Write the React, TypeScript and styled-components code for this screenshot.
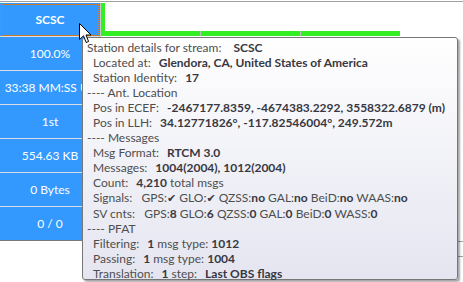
import styled, { createGlobalStyle } from 'styled-components';

const GlobalStyle = createGlobalStyle`
  html, body {
    margin: 0;
    padding: 0;
    background: #ffffff;
  }
  body {
    font-family: Lato, "Noto Sans", sans-serif;
  }
`;

const Screen = styled.div`
  position: relative;
  width: 463px;
  height: 282px;
  overflow: hidden;
  background: #ffffff;
  padding-top: 1px;
  box-sizing: border-box;
`;

const Frame = styled.div`
  display: flex;
  border-top: 1px solid #a0a0a0;
  padding-top: 1px;
`;

const SideColumn = styled.div`
  width: 100px;
  display: flex;
  flex-direction: column;
  border-right: 1px solid #c8c8c8;
`;

const SideCell = styled.div<{ $last?: boolean; $focused?: boolean; $bold?: boolean }>`
  height: 34px;
  box-sizing: border-box;
  background: #3399ff;
  color: #ffffff;
  font-size: 12px;
  font-weight: ${(p) => (p.$bold ? 700 : 400)};
  display: flex;
  align-items: center;
  justify-content: center;
  white-space: nowrap;
  overflow: hidden;
  border-bottom: 1px solid ${(p) => (p.$last ? '#7a7a7a' : '#d8dde4')};
  outline: ${(p) => (p.$focused ? '1px dotted #d08030' : 'none')};
  outline-offset: -2px;
`;

const MainArea = styled.div`
  flex: 1;
  display: flex;
  flex-direction: column;
`;

const BarRow = styled.div`
  display: flex;
  align-items: flex-end;
  height: 34px;
`;

const BarCell = styled.div<{ $first?: boolean }>`
  width: 99px;
  height: ${(p) => (p.$first ? 33 : 5)}px;
  box-sizing: border-box;
  border-bottom: 5px solid #33ee22;
  border-left: ${(p) => (p.$first ? '4px solid #33ee22' : 'none')};
  margin-bottom: 1px;
`;

const Tick = styled.div`
  width: 1px;
  height: 5px;
  margin-bottom: 1px;
  background: #c0c0c0;
`;

const BodyRows = styled.div`
  height: 204px;
  border-bottom: 1px solid #a0a0a0;
`;

const TailRow = styled.div`
  height: 14px;
  border-bottom: 1px solid #a0a0a0;
`;

const Tooltip = styled.div`
  position: absolute;
  left: 82px;
  top: 37px;
  width: 376px;
  height: 243px;
  box-sizing: border-box;
  border: 1px solid #767676;
  border-radius: 3px;
  background: linear-gradient(#ffffff, #e4e5f0);
  box-shadow: 2px 2px 2px rgba(0, 0, 0, 0.35);
  padding: 2px 4px 0 4px;
  font-size: 12px;
  line-height: 15px;
  color: #4e4e4e;
  white-space: nowrap;
`;

const Line = styled.div<{ $indent?: boolean }>`
  padding-left: ${(p) => (p.$indent ? '6px' : '0')};
`;

const Value = styled.span<{ $gap?: number }>`
  margin-left: ${(p) => p.$gap ?? 8}px;
  font-weight: 700;
  color: #383842;
`;

const B = styled.span`
  font-weight: 700;
  color: #383842;
`;

const Check = styled.span`
  font-weight: 700;
  color: #383842;
  font-family: "DejaVu Sans", sans-serif;
  font-size: 11px;
`;

const Cursor = styled.svg`
  position: absolute;
  left: 79px;
  top: 23px;
`;

const sideItems = ['SCSC', '100.0%', '33:38 MM:SS Up', '1st', '554.63 KB', '0 Bytes', '0 / 0'];

function App() {
  return (
    <Screen>
      <GlobalStyle />
      <Frame>
        <SideColumn>
          {sideItems.map((t, i) => (
            <SideCell key={t} $bold={i === 0} $focused={i === 0} $last={i === sideItems.length - 1}>
              {t}
            </SideCell>
          ))}
        </SideColumn>
        <MainArea>
          <BarRow>
            <BarCell $first />
            <Tick />
            <BarCell />
            <Tick />
            <BarCell />
          </BarRow>
          <BodyRows />
          <TailRow />
        </MainArea>
      </Frame>

      <Tooltip>
        <Line>
          Station details for stream:<Value $gap={12}>SCSC</Value>
        </Line>
        <Line $indent>
          Located at:<Value>Glendora, CA, United States of America</Value>
        </Line>
        <Line $indent>
          Station Identity:<Value>17</Value>
        </Line>
        <Line>---- Ant. Location</Line>
        <Line $indent>
          Pos in ECEF:<Value>-2467177.8359, -4674383.2292, 3558322.6879 (m)</Value>
        </Line>
        <Line $indent>
          Pos in LLH:<Value>34.12771826°, -117.82546004°, 249.572m</Value>
        </Line>
        <Line>---- Messages</Line>
        <Line $indent>
          Msg Format:<Value>RTCM 3.0</Value>
        </Line>
        <Line $indent>
          Messages:<Value>1004(2004), 1012(2004)</Value>
        </Line>
        <Line $indent>
          Count:<Value>4,210</Value> total msgs
        </Line>
        <Line $indent>
          Signals:&nbsp;&nbsp; GPS:<Check>✔</Check> GLO:<Check>✔</Check> QZSS:<B>no</B> GAL:<B>no</B> BeiD:<B>no</B> WAAS:<B>no</B>
        </Line>
        <Line $indent>
          SV cnts:&nbsp;&nbsp; GPS:<B>8</B> GLO:<B>6</B> QZSS:<B>0</B> GAL:<B>0</B> BeiD:<B>0</B> WASS:<B>0</B>
        </Line>
        <Line>---- PFAT</Line>
        <Line $indent>
          Filtering:<Value>1</Value> msg type: <B>1012</B>
        </Line>
        <Line $indent>
          Passing:<Value>1</Value> msg type: <B>1004</B>
        </Line>
        <Line $indent>
          Translation:<Value>1</Value> step:<Value>Last OBS flags</Value>
        </Line>
      </Tooltip>

      <Cursor width="14" height="22" viewBox="0 0 14 22">
        <path
          d="M0.5 0.5 L0.5 16.5 L4.5 12.8 L7.2 19.5 L9.6 18.5 L7 12 L12 12 Z"
          fill="#ffffff"
          stroke="#000000"
          strokeWidth="1"
          strokeLinejoin="miter"
        />
      </Cursor>
    </Screen>
  );
}

export default App;
